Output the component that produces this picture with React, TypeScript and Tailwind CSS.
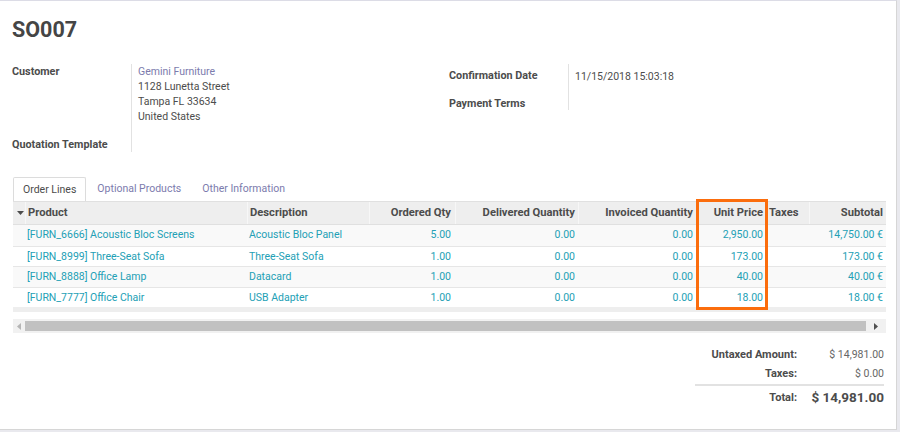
import React from 'react';

const rows = [
  { product: '[FURN_6666] Acoustic Bloc Screens', desc: 'Acoustic Bloc Panel', qty: '5.00', price: '2,950.00', subtotal: '14,750.00 €' },
  { product: '[FURN_8999] Three-Seat Sofa', desc: 'Three-Seat Sofa', qty: '1.00', price: '173.00', subtotal: '173.00 €' },
  { product: '[FURN_8888] Office Lamp', desc: 'Datacard', qty: '1.00', price: '40.00', subtotal: '40.00 €' },
  { product: '[FURN_7777] Office Chair', desc: 'USB Adapter', qty: '1.00', price: '18.00', subtotal: '18.00 €' },
];

const cols = 'grid grid-cols-[12px_222px_122px_86px_123px_119px_70px_42px_77px]';

export default function App() {
  return (
    <div className="w-[900px] h-[432px] bg-[#e9e9ee] font-['Roboto','Liberation_Sans',sans-serif] text-[10.5px] text-[#4c4c4c]">
      <div className="w-[897px] h-[430px] bg-white border-t border-t-[#dcdce6] border-r border-r-[#d6d6d6] border-b border-b-[#d6d6d6] flex flex-col">
        <h1 className="mt-[16px] ml-[12px] text-[21.5px] leading-[26px] font-bold text-[#454545]">SO007</h1>

        {/* header fields */}
        <div className="mt-[21px] ml-[12px] flex items-start">
          <div className="w-[437px] grid grid-cols-[119px_1fr]">
            <div className="font-bold text-[10.8px] leading-[15px]">Customer</div>
            <div className="border-l border-[#e2e2e2] pl-[6px] leading-[15px]">
              <div className="text-[#7c7bad]">Gemini Furniture</div>
              <div>1128 Lunetta Street</div>
              <div>Tampa FL 33634</div>
              <div>United States</div>
            </div>
            <div className="font-bold text-[10.8px] leading-[15px] pt-[13px]">Quotation Template</div>
            <div className="border-l border-[#e2e2e2] pt-[13px] h-[28px]"></div>
          </div>
          <div className="w-[300px] grid grid-cols-[119px_1fr]">
            <div className="font-bold text-[10.8px] leading-[15px] pt-[4px] h-[25px]">Confirmation Date</div>
            <div className="border-l border-[#e2e2e2] pl-[6px] leading-[15px] pt-[5px]">11/15/2018 15:03:18</div>
            <div className="font-bold text-[10.8px] leading-[15px] pt-[7px] h-[21px]">Payment Terms</div>
            <div className="border-l border-[#e2e2e2]"></div>
          </div>
        </div>

        {/* tabs */}
        <div className="mt-[25px] ml-[13px] flex h-[24px] leading-[24px]">
          <div className="px-[9px] border-t border-l border-r border-[#dcdcdc] rounded-t-[2px] bg-white">Order Lines</div>
          <div className="px-[11px] text-[#7c7bad]">Optional Products</div>
          <div className="px-[10px] text-[#7c7bad]">Other Information</div>
        </div>

        {/* table */}
        <div className="relative ml-[13px] w-[873px]">
          <div className={`${cols} h-[24px] bg-[#eeeeee] border-t border-b border-[#e0e0e0] font-bold text-[11.2px] leading-[22px]`}>
            <div className="flex items-center justify-center pl-[2px]">
              <svg width="7" height="4" viewBox="0 0 7 4"><path d="M0 0h7L3.5 4z" fill="#4c4c4c" /></svg>
            </div>
            <div className="border-l border-[#f7f7f7] pl-[2px]">Product</div>
            <div className="border-l border-[#f7f7f7] pl-[2px]">Description</div>
            <div className="border-l border-[#f7f7f7] pr-[4px] text-right">Ordered Qty</div>
            <div className="border-l border-[#f7f7f7] pr-[3px] text-right">Delivered Quantity</div>
            <div className="border-l border-[#f7f7f7] pr-[4px] text-right">Invoiced Quantity</div>
            <div className="border-l border-[#f7f7f7] pr-[4px] text-right">Unit Price</div>
            <div className="pl-[2px]">Taxes</div>
            <div className="border-l border-[#f7f7f7] pr-[3px] text-right">Subtotal</div>
          </div>
          {rows.map((r, i) => (
            <div
              key={r.product}
              className={`${cols} h-[20.5px] leading-[20px] text-[#23a0b5] ${i > 0 ? 'border-t border-[#e6e6e6]' : ''} ${i % 2 === 0 ? 'bg-[#f9f9f9]' : 'bg-white'}`}
            >
              <div></div>
              <div className="pl-[2px]">{r.product}</div>
              <div className="pl-[2px]">{r.desc}</div>
              <div className="pr-[4px] text-right">{r.qty}</div>
              <div className="pr-[3px] text-right">0.00</div>
              <div className="pr-[4px] text-right">0.00</div>
              <div className="pr-[4px] text-right">{r.price}</div>
              <div></div>
              <div className="pr-[3px] text-right">{r.subtotal}</div>
            </div>
          ))}
          <div className="h-[5px] bg-[#eeeeee]"></div>

          {/* scrollbar */}
          <div className="mt-[7px] h-[14px] bg-[#f1f1f1] flex items-center">
            <div className="w-[12px] flex justify-center">
              <svg width="4" height="7" viewBox="0 0 4 7"><path d="M4 0v7L0 3.5z" fill="#b5b5b5" /></svg>
            </div>
            <div className="w-[841px] h-[10px] bg-[#c1c1c1]"></div>
            <div className="flex-1 flex justify-center">
              <svg width="4" height="7" viewBox="0 0 4 7"><path d="M0 0v7l4-3.5z" fill="#505050" /></svg>
            </div>
          </div>

          {/* highlight annotation */}
          <div className="absolute left-[683px] top-[-2px] w-[72px] h-[111px] border-[3px] border-[#fb6d0d]"></div>
        </div>

        {/* totals */}
        <div className="mt-[12px] flex justify-end pr-[12px]">
          <div className="grid grid-cols-[102px_87px]">
            <div className="font-bold text-[11px] text-right leading-[19px]">Untaxed Amount:</div>
            <div className="text-right leading-[19px] text-[#666]">$ 14,981.00</div>
            <div className="font-bold text-[11px] text-right leading-[19px]">Taxes:</div>
            <div className="text-right leading-[19px] text-[#666]">$ 0.00</div>
            <div className="col-span-2 mt-[1px] border-t-2 border-[#e2e2e2]"></div>
            <div className="font-bold text-[11px] text-right leading-[22px] pt-[1px]">Total:</div>
            <div className="font-bold text-right text-[13.5px] leading-[22px]">$ 14,981.00</div>
          </div>
        </div>
      </div>
    </div>
  );
}
